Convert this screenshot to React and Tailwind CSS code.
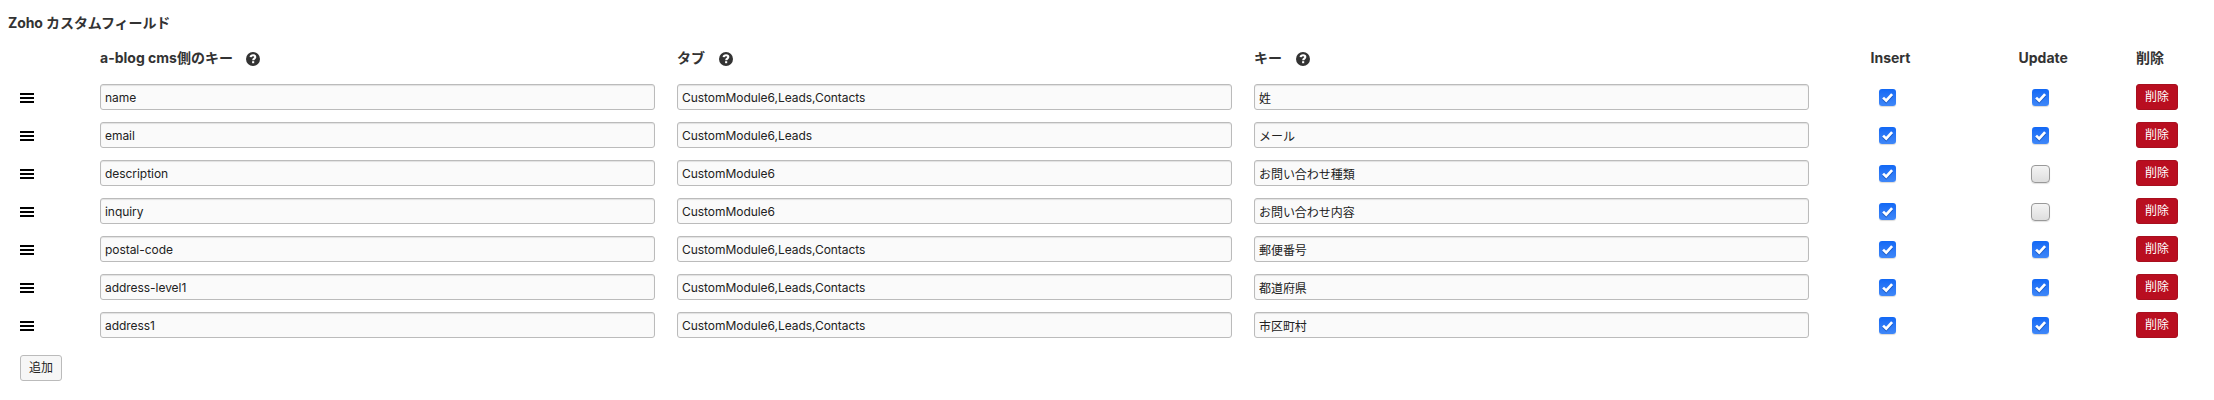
const FIELDS = [
  { key: "name", tab: "CustomModule6,Leads,Contacts", label: "姓", insert: true, update: true },
  { key: "email", tab: "CustomModule6,Leads", label: "メール", insert: true, update: true },
  { key: "description", tab: "CustomModule6", label: "お問い合わせ種類", insert: true, update: false },
  { key: "inquiry", tab: "CustomModule6", label: "お問い合わせ内容", insert: true, update: false },
  { key: "postal-code", tab: "CustomModule6,Leads,Contacts", label: "郵便番号", insert: true, update: true },
  { key: "address-level1", tab: "CustomModule6,Leads,Contacts", label: "都道府県", insert: true, update: true },
  { key: "address1", tab: "CustomModule6,Leads,Contacts", label: "市区町村", insert: true, update: true },
];

const COLUMNS = "grid grid-cols-[80px_577px_577px_617px_148px_117px_58px] pl-5";

function HelpIcon() {
  return (
    <svg className="ml-[13.5px] mt-[2px] size-3.5 shrink-0" viewBox="0 0 14 14" aria-hidden="true">
      <circle cx="7" cy="7" r="7" fill="#333" />
      <path
        d="M4.6 5.2C4.8 3.9 5.7 3.3 7.1 3.3c1.3 0 2.2.7 2.2 1.8 0 1.6-2 1.5-2.1 3.1"
        fill="none"
        stroke="#fff"
        strokeWidth="2.1"
      />
      <rect x="6.1" y="9.2" width="2.1" height="2" fill="#fff" />
    </svg>
  );
}

function DragHandle() {
  return (
    <span className="mt-px flex w-3.5 flex-col gap-0.5">
      <span className="h-0.5 bg-black" />
      <span className="h-0.5 bg-black" />
      <span className="h-0.5 bg-black" />
    </span>
  );
}

function TextField({ value, label }) {
  return (
    <input
      type="text"
      defaultValue={value}
      aria-label={label}
      className="h-[26px] w-[555px] rounded-[3px] border border-[#bbb] bg-[#fafafa] px-1 text-xs tracking-[-0.045px] text-[#222] shadow-[inset_0_1px_1px_rgba(0,0,0,0.1)] outline-none"
    />
  );
}

function Checkbox({ checked }) {
  if (!checked) {
    return (
      <span className="-ml-px mt-px h-[18px] w-[19px] rounded-[4px] border border-[#999] bg-linear-to-b from-[#f4f4f4] to-[#dedede] shadow-[0_1px_1px_rgba(0,0,0,0.12)]" />
    );
  }
  return (
    <span className="size-[17px] rounded-[3px] bg-linear-to-b from-[#1168f5] to-[#3f87f8] shadow-[0_1px_1px_rgba(0,0,0,0.15)]">
      <svg className="size-[17px]" viewBox="0 0 17 17" aria-hidden="true">
        <path d="M4.1 9.9 7.2 13 13.3 6.5" fill="none" stroke="#0b3f9c" strokeOpacity="0.55" strokeWidth="2.4" />
        <path d="M4.1 8.6 7.2 11.6 13.1 5.1" fill="none" stroke="#fff" strokeWidth="2.7" />
      </svg>
    </span>
  );
}

export default function App() {
  return (
    <main className="h-[400px] w-[2214px] overflow-hidden bg-white font-['Inter','Noto_Sans_CJK_JP',sans-serif] text-[#333]">
      <h2 className="h-[46px] pl-2 pt-[13px] text-sm leading-5 font-bold tracking-[-0.08px]">Zoho カスタムフィールド</h2>
      <div className={`${COLUMNS} h-[29px] text-sm leading-6 font-bold`}>
        <span />
        <span className="flex h-6 items-center">a-blog cms側のキー<HelpIcon /></span>
        <span className="flex h-6 items-center">タブ<HelpIcon /></span>
        <span className="flex h-6 items-center">キー<HelpIcon /></span>
        <span className="-ml-[0.5px]">Insert</span>
        <span className="-ml-[0.5px]">Update</span>
        <span>削除</span>
      </div>
      <div className="pt-[3px]">
        {FIELDS.map((field) => (
          <div key={field.key} className={`${COLUMNS} h-[38px] items-center`}>
            <DragHandle />
            <TextField value={field.key} label="a-blog cms側のキー" />
            <TextField value={field.tab} label="タブ" />
            <TextField value={field.label} label="キー" />
            <span className="flex pl-2"><Checkbox checked={field.insert} /></span>
            <span className="flex pl-[13px]"><Checkbox checked={field.update} /></span>
            <button
              type="button"
              className="h-[26px] w-[42px] rounded-[3px] border border-[#a80f1e] bg-[#b90e20] text-xs text-white"
            >
              削除
            </button>
          </div>
        ))}
      </div>
      <button
        type="button"
        className="ml-5 mt-[11px] h-[26px] w-[42px] rounded-[3px] border border-[#bbb] bg-[#f6f6f6] text-xs text-[#222]"
      >
        追加
      </button>
    </main>
  );
}
